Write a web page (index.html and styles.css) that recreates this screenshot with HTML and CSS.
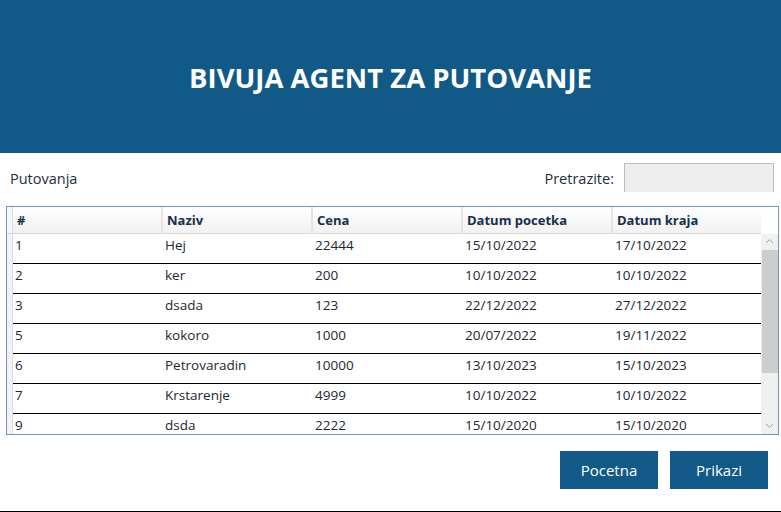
FILE: index.html
```html
<!DOCTYPE html>
<html>
<head>
<meta charset="utf-8">
<link rel="stylesheet" href="styles.css">
</head>
<body>
<div class="app">
  <header class="banner"><h1 class="title">BIVUJA AGENT ZA PUTOVANJE</h1></header>
  <div class="toolbar">
    <span class="label">Putovanja</span>
    <div class="search">
      <span class="label">Pretrazite:</span>
      <div class="textbox"></div>
    </div>
  </div>
  <div class="grid">
    <div class="grid-main">
      <div class="row head">
        <div class="rowhead"></div>
        <div class="cell">#</div>
        <div class="cell">Naziv</div>
        <div class="cell">Cena</div>
        <div class="cell">Datum pocetka</div>
        <div class="cell">Datum kraja</div>
      </div>
      <div class="row"><div class="rowhead"></div><div class="cell">1</div><div class="cell">Hej</div><div class="cell">22444</div><div class="cell">15/10/2022</div><div class="cell">17/10/2022</div></div>
      <div class="row"><div class="rowhead"></div><div class="cell">2</div><div class="cell">ker</div><div class="cell">200</div><div class="cell">10/10/2022</div><div class="cell">10/10/2022</div></div>
      <div class="row"><div class="rowhead"></div><div class="cell">3</div><div class="cell">dsada</div><div class="cell">123</div><div class="cell">22/12/2022</div><div class="cell">27/12/2022</div></div>
      <div class="row"><div class="rowhead"></div><div class="cell">5</div><div class="cell">kokoro</div><div class="cell">1000</div><div class="cell">20/07/2022</div><div class="cell">19/11/2022</div></div>
      <div class="row"><div class="rowhead"></div><div class="cell">6</div><div class="cell">Petrovaradin</div><div class="cell">10000</div><div class="cell">13/10/2023</div><div class="cell">15/10/2023</div></div>
      <div class="row"><div class="rowhead"></div><div class="cell">7</div><div class="cell">Krstarenje</div><div class="cell">4999</div><div class="cell">10/10/2022</div><div class="cell">10/10/2022</div></div>
      <div class="row"><div class="rowhead"></div><div class="cell">9</div><div class="cell">dsda</div><div class="cell">2222</div><div class="cell">15/10/2020</div><div class="cell">15/10/2020</div></div>
    </div>
    <div class="scrollbar">
      <div class="sb-corner"></div>
      <div class="sb-track">
        <svg class="arrow up" width="9" height="6" viewBox="0 0 9 6"><path d="M1 5 L4.5 1.5 L8 5" fill="none" stroke="#a0a0a0" stroke-width="1"/></svg>
        <div class="thumb"></div>
        <svg class="arrow down" width="9" height="6" viewBox="0 0 9 6"><path d="M1 1 L4.5 4.5 L8 1" fill="none" stroke="#a0a0a0" stroke-width="1"/></svg>
      </div>
    </div>
  </div>
  <div class="actions">
    <button class="btn">Pocetna</button>
    <button class="btn">Prikazi</button>
  </div>
  <div class="bottom-line"></div>
</div>
</body>
</html>
```
FILE: styles.css
```css
html, body {
  margin: 0;
  padding: 0;
  background: #ffffff;
}
body {
  font-family: "Open Sans", "Noto Sans", sans-serif;
  font-size: 14px;
  color: #1c2733;
}
.app {
  width: 781px;
  height: 512px;
  display: flex;
  flex-direction: column;
  overflow: hidden;
}
.banner {
  height: 153px;
  background: #115a87;
  display: flex;
  align-items: center;
  justify-content: center;
}
.title {
  margin: 0;
  color: #ffffff;
  font-size: 27.5px;
  font-weight: 700;
  letter-spacing: 0;
  padding-top: 2px;
}
.toolbar {
  height: 53px;
  display: flex;
  justify-content: space-between;
  align-items: flex-start;
  padding: 0 7px 0 10px;
}
.toolbar > .label {
  margin-top: 16px;
}
.label {
  font-size: 14.5px;
  color: #1e2d3d;
}
.search {
  display: flex;
  align-items: flex-start;
  gap: 10px;
  margin-top: 10px;
}
.search .label {
  margin-top: 6px;
}
.textbox {
  width: 148px;
  height: 28px;
  background: #eeeeee;
  border: 1px solid #bdbdbd;
  border-bottom: none;
}
.grid {
  margin-left: 6px;
  width: 771px;
  height: 227px;
  border: 1px solid #7293bb;
  display: flex;
}
.grid-main {
  flex: 1;
  overflow: hidden;
}
.row {
  display: flex;
  height: 30px;
  position: relative;
}
.row .rowhead {
  width: 5px;
  flex: none;
  background: #f3f3f3;
  border-right: 1px solid #dcdcdc;
}
.row:not(.head)::after {
  content: "";
  position: absolute;
  left: 6px;
  right: 0;
  bottom: 0;
  height: 1px;
  background: #000000;
}
.cell {
  width: 150px;
  flex: none;
  box-sizing: border-box;
  padding: 2px 0 0 2px;
  line-height: 18px;
  font-size: 13.5px;
  white-space: nowrap;
}
.head {
  height: 26px;
  border-bottom: 1px solid #d8d8d8;
  background: linear-gradient(#ffffff, #f1f1f2);
}
.head .rowhead {
  background: #f7f7f7;
}
.head .cell {
  font-weight: 700;
  font-size: 13px;
  color: #15304d;
  padding: 4px 0 0 4px;
  border-right: 2px solid #e4e4e4;
}
.head .cell:last-child {
  border-right: none;
}
.scrollbar {
  width: 17px;
  flex: none;
  display: flex;
  flex-direction: column;
}
.sb-corner {
  height: 27px;
  background: #ffffff;
}
.sb-track {
  flex: 1;
  background: #f0f0f0;
  display: flex;
  flex-direction: column;
  align-items: center;
}
.arrow.up {
  margin-top: 4px;
}
.thumb {
  width: 16px;
  height: 123px;
  margin-top: 6px;
  background: #cdcdcd;
}
.arrow.down {
  margin-top: auto;
  margin-bottom: 5px;
}
.actions {
  display: flex;
  justify-content: flex-end;
  gap: 12px;
  padding: 15px 13px 0 0;
  height: 61px;
  box-sizing: border-box;
  margin-top: 1px;
}
.btn {
  width: 98px;
  height: 38px;
  border: none;
  background: #115a87;
  color: #ffffff;
  font-family: "Open Sans", "Noto Sans", sans-serif;
  font-size: 15px;
  padding: 0;
}
.bottom-line {
  margin-top: auto;
  height: 1px;
  background: #000000;
  margin-bottom: 0;
}
```
